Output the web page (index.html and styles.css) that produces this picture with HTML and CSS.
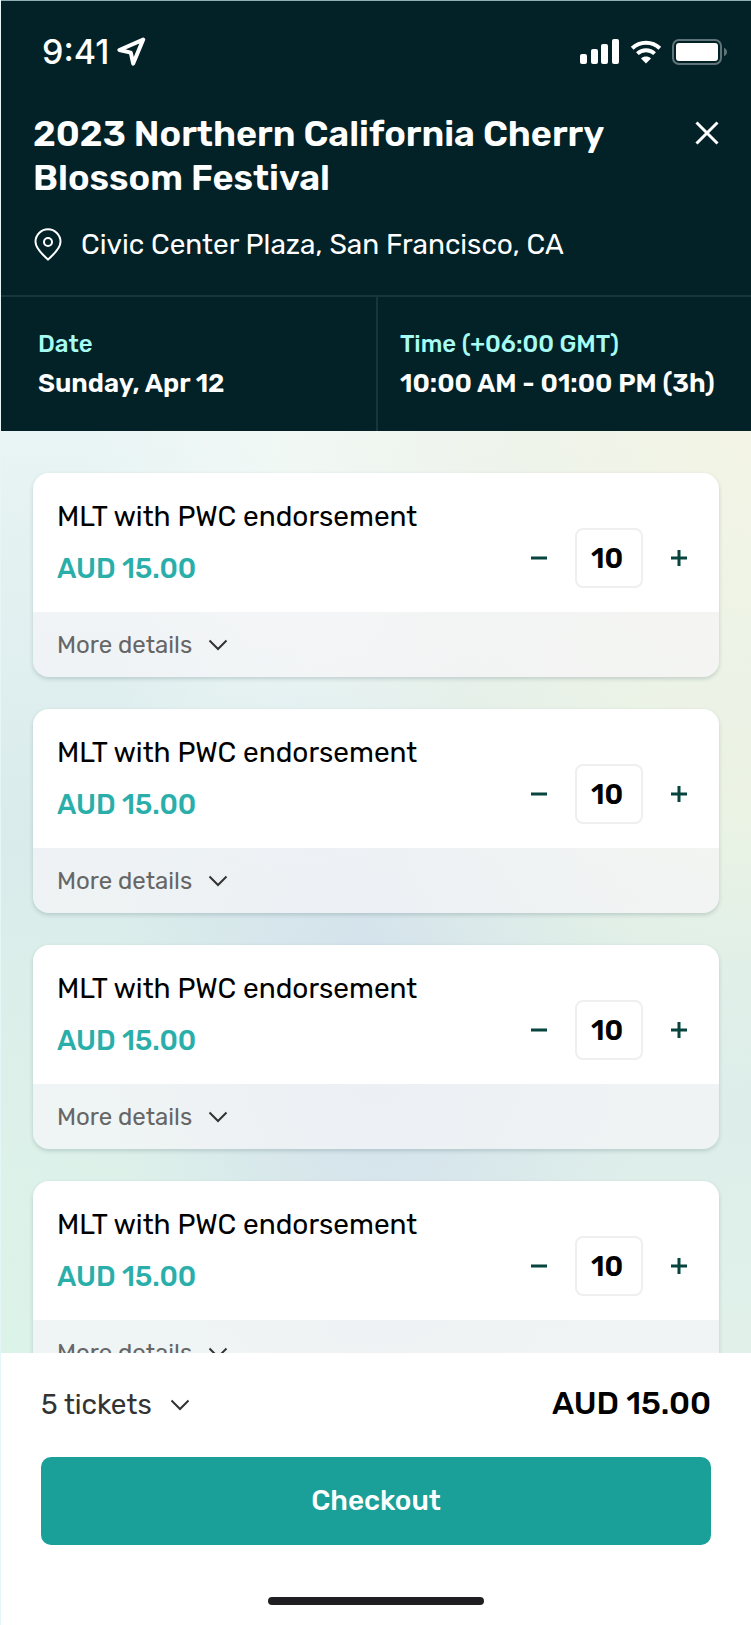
FILE: index.html
```html
<!DOCTYPE html>
<html lang="en">
<head>
    <meta charset="UTF-8" />
    <meta name="viewport" content="width=device-width, initial-scale=1.0" />
    <title>2023 Northern California Cherry Blossom Festival - Tickets</title>
    <link rel="stylesheet" href="styles.css">
</head>
<body>

<header class="event-header">
    <div class="status-bar">
        <div class="status-time">
            <span>9:41</span>
            <svg class="icon-location" viewBox="0 0 30 30" aria-hidden="true">
                <path d="M26.2 2.6 L2.4 13 L13.8 15.6 L16.2 26.6 Z"/>
            </svg>
        </div>
        <div class="status-icons">
            <svg class="icon-signal" viewBox="0 0 40 26" aria-hidden="true">
                <rect x="0" y="15" width="7" height="10" rx="2"/>
                <rect x="11" y="10" width="7" height="15" rx="2"/>
                <rect x="21" y="5" width="7" height="20" rx="2"/>
                <rect x="32" y="0" width="7" height="25" rx="2"/>
            </svg>
            <svg class="icon-wifi" viewBox="0 0 32 24" aria-hidden="true">
                <path d="M2.2 8.2 C9.8 0.8 22.2 0.8 29.8 8.2"/>
                <path d="M7.4 13.6 C12.2 9.2 19.8 9.2 24.6 13.6"/>
                <path class="dot" d="M11 18.4 C13.8 15.9 18.2 15.9 21 18.4 L16 23.4 Z"/>
            </svg>
            <svg class="icon-battery" viewBox="0 0 56 26" aria-hidden="true">
                <rect class="shell" x="1" y="1" width="48" height="24" rx="6"/>
                <rect class="level" x="4" y="4" width="42" height="18" rx="3"/>
                <path class="tip" d="M52 9 C56 10 56 16 52 17 Z"/>
            </svg>
        </div>
    </div>

    <div class="event-top">
        <h1>2023 Northern California Cherry Blossom Festival</h1>
        <button class="close-btn" type="button" aria-label="Close">
            <svg viewBox="0 0 24 24"><path d="M1.5 1.5 L22.5 22.5 M22.5 1.5 L1.5 22.5"/></svg>
        </button>
    </div>

    <p class="event-place">
        <svg viewBox="0 0 28 34" aria-hidden="true">
            <path d="M14 31.5 C10 27.6 1.5 21.4 1.5 13.8 A12.5 12.5 0 0 1 26.5 13.8 C26.5 21.4 18 27.6 14 31.5 Z"/>
            <circle cx="14" cy="14" r="4"/>
        </svg>
        <span>Civic Center Plaza, San Francisco, CA</span>
    </p>

    <dl class="event-when">
        <div class="when-cell">
            <dt>Date</dt>
            <dd>Sunday, Apr 12</dd>
        </div>
        <div class="when-cell">
            <dt>Time (+06:00 GMT)</dt>
            <dd>10:00 AM - 01:00 PM (3h)</dd>
        </div>
    </dl>
</header>

<main class="tickets" id="tickets"></main>

<footer class="checkout-bar">
    <div class="summary">
        <button class="summary-toggle" type="button">
            <span>5 tickets</span>
            <svg class="chevron" viewBox="0 0 20 12"><path d="M1.5 1.5 L10 10 L18.5 1.5"/></svg>
        </button>
        <strong class="total">AUD 15.00</strong>
    </div>
    <button class="checkout-btn" type="button">Checkout</button>
    <div class="home-indicator"></div>
</footer>

<script src="script.js"></script>
</body>
</html>
```

FILE: styles.css
```css
:root {
    --dark: #022228;
    --line: #17363b;
    --aqua: #a6fbf3;
    --teal: #1aa098;
    --price: #2aaeaa;
    --control: #07443d;
    --white: #fff;
}

* {
    box-sizing: border-box;
    margin: 0;
    padding: 0;
}

body {
    display: flex;
    flex-direction: column;
    height: 100vh;
    font-family: Rubik, Roboto, sans-serif;
    font-size: 28px;
    line-height: 40px;
    color: #000;
    background: var(--white);
    border-left: 1px solid #e6f6f6;
}

button {
    font: inherit;
    color: inherit;
    background: none;
    border: none;
    cursor: pointer;
}

svg {
    display: block;
    flex: none;
    fill: none;
    stroke: currentColor;
}

/* Header */
.event-header {
    flex: none;
    background: var(--dark);
    color: var(--white);
    border-top: 1px solid #8fb0b3;
}

.status-bar {
    display: flex;
    justify-content: space-between;
    align-items: center;
    height: 111px;
    padding: 0 23px 10px 41px;
}

.status-time {
    display: flex;
    align-items: center;
    gap: 8px;
    font-family: Inter, sans-serif;
    font-size: 34px;
    font-weight: 500;
}

.icon-location {
    width: 30px;
    height: 30px;
    stroke-width: 4;
    stroke-linejoin: round;
}

.status-icons {
    display: flex;
    align-items: center;
    gap: 10px;
}

.icon-signal {
    width: 40px;
    height: 26px;
    fill: currentColor;
    stroke: none;
}

.icon-wifi {
    width: 32px;
    height: 24px;
    stroke-width: 4;
}

.icon-wifi .dot {
    fill: currentColor;
    stroke: none;
}

.icon-battery {
    width: 56px;
    height: 26px;
}

.icon-battery .shell {
    stroke: #5f7478;
    stroke-width: 2;
}

.icon-battery .level {
    fill: currentColor;
    stroke: none;
}

.icon-battery .tip {
    fill: #5f7478;
    stroke: none;
}

.event-top {
    display: flex;
    justify-content: space-between;
    align-items: flex-start;
    gap: 48px;
    padding: 0 32px;
}

.event-top h1 {
    max-width: 600px;
    font-size: 36px;
    font-weight: 600;
    line-height: 44px;
}

.close-btn {
    padding: 9px 0;
}

.close-btn svg {
    width: 24px;
    height: 24px;
    stroke-width: 3;
}

.event-place {
    display: flex;
    align-items: center;
    gap: 19px;
    padding: 25px 33px 30px;
}

.event-place svg {
    width: 28px;
    height: 34px;
    stroke-width: 2;
}

.event-when {
    display: grid;
    grid-template-columns: 1fr 1fr;
    border-top: 2px solid var(--line);
}

.when-cell {
    height: 134px;
    padding: 27px 0 0 37px;
}

.when-cell + .when-cell {
    padding-left: 22px;
    border-left: 2px solid var(--line);
}

.when-cell dt {
    font-size: 24px;
    font-weight: 500;
    color: var(--aqua);
}

.when-cell dd {
    font-size: 26px;
    font-weight: 600;
}

/* Ticket list */
.tickets {
    flex: 1;
    display: flex;
    flex-direction: column;
    gap: 32px;
    min-height: 0;
    padding: 42px 32px;
    overflow-y: auto;
    scrollbar-width: none;
    background:
        radial-gradient(circle at 100% 0, #f3f4e4 0, rgba(243, 244, 228, 0) 45%),
        radial-gradient(ellipse at 40% 0, #f1f9f7 0, rgba(241, 249, 247, 0) 35%),
        radial-gradient(ellipse at 100% 40%, #e8f3e4 0, rgba(232, 243, 228, 0) 40%),
        radial-gradient(ellipse at 50% 66%, #d3e1ec 0, rgba(211, 225, 236, 0) 50%),
        radial-gradient(ellipse at 0 100%, #dcf3e9 0, rgba(220, 243, 233, 0) 40%),
        linear-gradient(#e9f4f4, #d9ebeb 45%, #e1f1ea);
}

.ticket {
    flex: none;
    border-radius: 16px;
    overflow: hidden;
    box-shadow: 0 2px 4px rgba(30, 70, 75, 0.2);
}

.ticket-main {
    display: flex;
    justify-content: space-between;
    align-items: flex-end;
    padding: 18px 24px 17px;
    background: var(--white);
}

.ticket h2 {
    font-size: 28px;
    font-weight: 400;
    line-height: 52px;
}

.price {
    font-weight: 500;
    line-height: 52px;
    color: var(--price);
}

.stepper {
    display: flex;
    align-items: center;
    gap: 20px;
    padding-bottom: 7px;
    color: var(--control);
}

.stepper button {
    padding: 8px;
}

.stepper svg {
    width: 16px;
    height: 16px;
    stroke-width: 3;
}

.stepper input {
    width: 68px;
    height: 60px;
    padding-left: 14px;
    font: inherit;
    font-weight: 600;
    color: #000;
    border: 2px solid #efefef;
    border-radius: 8px;
    background: var(--white);
}

.details {
    display: flex;
    align-items: center;
    gap: 16px;
    width: 100%;
    height: 65px;
    padding: 0 24px;
    font-size: 24px;
    color: #666;
    background: rgba(246, 245, 248, 0.7);
}

.chevron {
    width: 20px;
    height: 12px;
    stroke-width: 2;
}

.details .chevron {
    color: #333;
}

/* Checkout bar */
.checkout-bar {
    flex: none;
    padding: 32px 40px 20px;
    background: var(--white);
}

.summary {
    display: flex;
    justify-content: space-between;
    align-items: flex-start;
    margin-bottom: 32px;
}

.summary-toggle {
    display: flex;
    align-items: center;
    gap: 18px;
    color: #333;
}

.total {
    font-size: 32px;
    font-weight: 500;
    line-height: 36px;
}

.checkout-btn {
    width: 100%;
    height: 88px;
    font-weight: 500;
    color: var(--white);
    background: var(--teal);
    border-radius: 10px;
}

.home-indicator {
    width: 216px;
    height: 8px;
    margin: 52px auto 0;
    border-radius: 4px;
    background: #1f1f21;
}
```

FILE: script.js
```js
const tickets = [
    { id: 1, name: 'MLT with PWC endorsement', price: 'AUD 15.00', qty: 10 },
    { id: 2, name: 'MLT with PWC endorsement', price: 'AUD 15.00', qty: 10 },
    { id: 3, name: 'MLT with PWC endorsement', price: 'AUD 15.00', qty: 10 },
    { id: 4, name: 'MLT with PWC endorsement', price: 'AUD 15.00', qty: 10 }
];

const list = document.getElementById('tickets');

tickets.forEach(ticket => {
    const card = document.createElement('article');
    card.className = 'ticket';
    card.innerHTML = `
        <div class="ticket-main">
            <div>
                <h2>${ticket.name}</h2>
                <p class="price">${ticket.price}</p>
            </div>
            <div class="stepper">
                <button type="button" data-step="-1" aria-label="Remove one">
                    <svg viewBox="0 0 16 16"><path d="M0 8 H16"/></svg>
                </button>
                <input type="text" inputmode="numeric" id="qty-${ticket.id}" aria-label="Quantity" value="${ticket.qty}">
                <button type="button" data-step="1" aria-label="Add one">
                    <svg viewBox="0 0 16 16"><path d="M0 8 H16 M8 0 V16"/></svg>
                </button>
            </div>
        </div>
        <button class="details" type="button">
            <span>More details</span>
            <svg class="chevron" viewBox="0 0 20 12"><path d="M1.5 1.5 L10 10 L18.5 1.5"/></svg>
        </button>
    `;

    const input = card.querySelector('input');
    card.querySelectorAll('[data-step]').forEach(btn => {
        btn.addEventListener('click', () => {
            input.value = Math.max(0, Number(input.value) + Number(btn.dataset.step));
        });
    });

    list.appendChild(card);
});
```
